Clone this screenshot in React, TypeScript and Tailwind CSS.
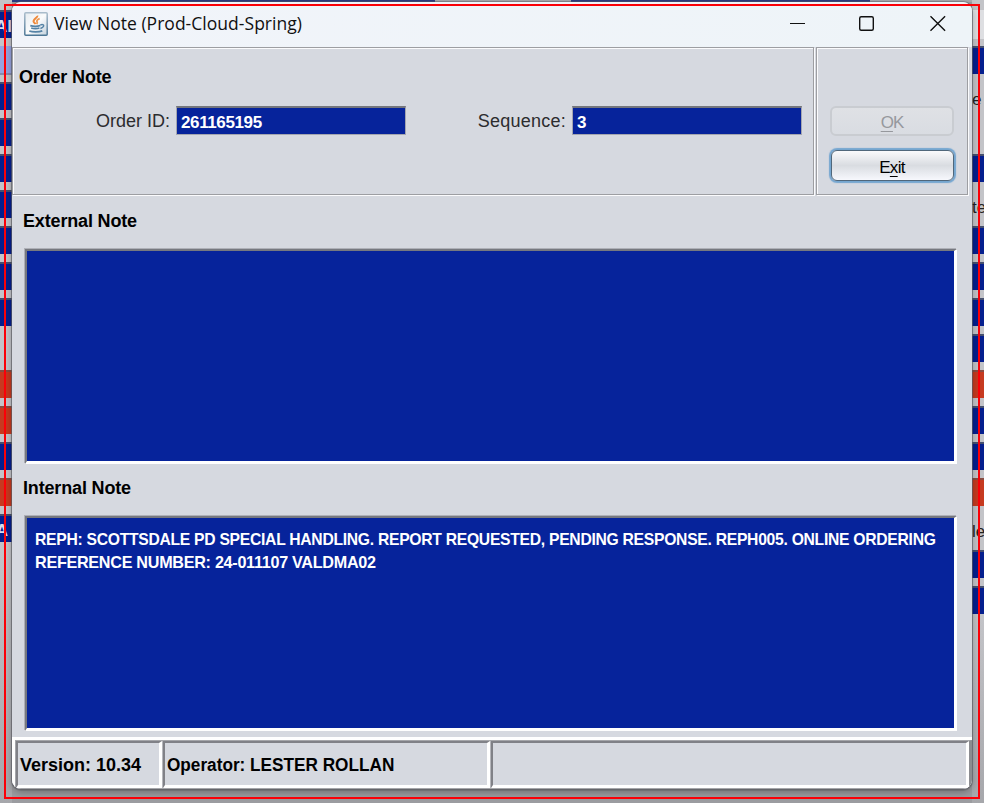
import React from "react";

type Band = { h: number; c: string; t?: string };

const bandStyles: Record<string, string> = {
  gray: "bg-[#c3c4c8]",
  blue: "bg-[#051f8e] border-t-2 border-[#46506f]",
  red: "bg-[#c63a20] border-t-2 border-[#8a4d42]",
  lav: "bg-[#98a5e0] border-b-2 border-[#858cae]",
  white: "bg-[#dedfe2]",
  fill: "bg-linear-to-b from-[#c3c4c8] to-[#a6a7ab]",
};

const b = (c: string): Band[] => [{ h: 28, c }, { h: 8, c: "gray" }];

const leftBands: Band[] = [
  { h: 10, c: "gray" },
  { h: 28, c: "blue", t: "Al" },
  { h: 8, c: "gray" },
  { h: 29, c: "lav" },
  { h: 7, c: "gray" },
  ...b("blue"), ...b("blue"), ...b("blue"), ...b("blue"), ...b("blue"), ...b("blue"),
  { h: 28, c: "blue" },
  { h: 44, c: "gray" },
  ...b("red"), ...b("red"), ...b("blue"), ...b("red"),
  { h: 28, c: "blue", t: "A" },
  { h: 261, c: "fill" },
];

const rightBands: Band[] = [
  { h: 10, c: "gray" },
  { h: 29, c: "white" },
  { h: 7, c: "gray" },
  { h: 28, c: "blue" },
  { h: 50, c: "gray", t: "e" },
  { h: 30, c: "gray" },
  { h: 28, c: "blue" },
  { h: 6, c: "gray" },
  { h: 38, c: "gray", t: "te" },
  ...b("blue"), ...b("blue"), ...b("blue"), ...b("blue"),
  ...b("red"), ...b("blue"), ...b("blue"),
  { h: 28, c: "red" },
  { h: 6, c: "gray" },
  { h: 38, c: "gray", t: "le" },
  ...b("blue"),
  { h: 28, c: "blue" },
  { h: 189, c: "fill" },
];

function Strip({ bands, side }: { bands: Band[]; side: "left" | "right" }) {
  return (
    <div className="flex w-3 shrink-0 flex-col overflow-hidden">
      {bands.map((x, i) => (
        <div
          key={i}
          style={{ height: x.h }}
          className={`flex w-full shrink-0 items-center overflow-hidden whitespace-nowrap text-[17px] leading-none ${bandStyles[x.c]} ${
            side === "left" ? "justify-end pt-0.5 font-bold text-[#d8dcec]" : "text-[#222]"
          } ${x.t === "A" ? "pr-1" : ""}`}
        >
          {x.t}
        </div>
      ))}
    </div>
  );
}

function JavaIcon() {
  return (
    <svg width="24" height="24" viewBox="0 0 24 24" fill="none">
      <defs>
        <linearGradient id="jbg" x1="0" y1="0" x2="1" y2="1">
          <stop offset="0" stopColor="#e6ecf0" />
          <stop offset=".5" stopColor="#fafbfc" />
          <stop offset="1" stopColor="#c3d2dd" />
        </linearGradient>
        <linearGradient id="jbd" x1="0" y1="0" x2="0" y2="1">
          <stop offset="0" stopColor="#a9bccb" />
          <stop offset="1" stopColor="#4d7796" />
        </linearGradient>
      </defs>
      <rect x=".8" y=".8" width="22.4" height="22.4" rx="1" fill="url(#jbg)" stroke="url(#jbd)" strokeWidth="1.5" />
      <path d="M13.4 3.6c.6 2-4.6 3.6-3.8 6.1.3 1 1.6 1.4 2 2.4" stroke="#ee8a3c" strokeWidth="2" />
      <path d="M15.7 6.7c-2.1.8-3.4 1.8-2.7 3 .5.9.8 1.3-.4 2.4" stroke="#ee9a55" strokeWidth="1.8" />
      <path d="M6.3 13.6c3 .9 7.5.8 10-.1M7.2 16c2.6.8 6 .7 8.2 0M5.3 19c3.4 1.2 9.7 1.1 13-.2" stroke="#5683a6" strokeWidth="1.8" />
      <path d="M16.3 13c2.5-1.2 4.2.2 3 1.7-.6.8-1.7 1.4-2.9 1.8" stroke="#5683a6" strokeWidth="1.4" />
    </svg>
  );
}

function Field({ value }: { value: string }) {
  return (
    <div className="flex h-[29px] w-[230px] items-center border border-t-2 border-[#a4a6b0] border-t-[#74767d] bg-[#06239b] pt-[3px] pl-1 text-[17px] font-bold tracking-[-0.38px] text-white">
      {value}
    </div>
  );
}

const etched =
  "border border-[#9d9ea2] shadow-[inset_1px_1px_0_#fbfbfd,1px_1px_0_#fbfbfd]";

const heading = "ml-[11px] text-[18px] leading-[22px] font-bold tracking-[-0.16px] text-black";

function Note({ children }: { children?: React.ReactNode }) {
  return (
    <div className="ml-[13px] h-[215px] w-[932px] border-2 border-r-[3px] border-b-[3px] border-t-[#76787f] border-r-white border-b-white border-l-[#76787f] bg-[#06239b] pt-[10px] pl-2 text-[17px] leading-[23px] font-bold whitespace-nowrap text-white shadow-[-1px_-1px_0_#aeb0b7]">
      {children}
    </div>
  );
}

const cell =
  "flex items-center border-2 border-r-[3px] border-b-[3px] border-t-[#808187] border-l-[#808187] border-r-white border-b-white pt-0.5 pl-0.5 text-[18px] font-bold whitespace-nowrap text-black";

export default function App() {
  return (
    <div className="relative flex h-[803px] w-[984px] overflow-hidden bg-[#c3c4c8] font-['Liberation_Sans',Arial,sans-serif] text-[#101010]">
      <Strip bands={leftBands} side="left" />
      <div className="flex h-full w-[960px] shrink-0 flex-col bg-[#9b9ca0]">
        <div className="flex h-0.5 shrink-0 bg-[#a9aaae]">
          <div className="w-[423px] bg-[#2b3b82]" />
          <div className="w-[136px]" />
          <div className="w-[299px] bg-[#2b3b82]" />
        </div>
        <div className="z-10 flex h-[787px] w-full shrink-0 flex-col overflow-hidden rounded-[9px] bg-[#d6d9e0] shadow-[0_0_0_1px_rgba(90,92,98,0.45),0_1px_0_1px_rgba(90,92,98,0.4),0_3px_8px_rgba(0,0,0,0.3)]">
          <header className="flex h-[45px] shrink-0 items-center bg-linear-to-r from-[#f1f4fa] to-[#eef4f8] pl-3">
            <div className="-mt-0.5">
              <JavaIcon />
            </div>
            <h1 className="-mt-0.5 ml-1.5 flex-1 font-['Open_Sans','Noto_Sans',sans-serif] text-[17.5px] tracking-[0.03px] whitespace-nowrap">
              View Note (Prod-Cloud-Spring)
            </h1>
            <svg className="-mt-1 mr-[26px]" width="156" height="18" viewBox="0 0 156 18" fill="none" stroke="#111" strokeWidth="1.4">
              <path d="M0 9.5h15" strokeWidth="1" />
              <rect x="69.7" y="2.7" width="13.6" height="13.6" rx="1.5" />
              <path d="M140.5 2.2l14.6 14.6M155.1 2.2l-14.6 14.6" />
            </svg>
          </header>
          <div className="flex h-[148px] shrink-0 gap-0.5">
            <section className={`w-[802px] ${etched}`}>
              <h2 className="mt-[18px] ml-1.5 text-[18px] leading-[22px] font-bold tracking-[-0.16px] text-black">Order Note</h2>
              <div className="mt-[18px] flex items-center text-[18px] text-[#2c2c2e]">
                <label className="w-[163px] pt-0.5 pr-1.5 text-right whitespace-nowrap">Order ID:</label>
                <Field value="261165195" />
                <label className="w-[166px] pt-0.5 pr-1.5 text-right tracking-[0.25px] whitespace-nowrap">Sequence:</label>
                <Field value="3" />
              </div>
            </section>
            <section className={`flex w-[152px] flex-col items-center pt-[58px] ${etched}`}>
              <button className="flex h-[30px] w-[124px] items-center justify-center rounded-[6px] border-2 border-[#c9ccd1] bg-linear-to-b from-[#dfe1e5] to-[#d9dce2] pt-[3px] text-[17px] tracking-[-1px] text-[#96989d]">
                <span className="underline underline-offset-[3px]">O</span>K
              </button>
              <button className="mt-[14px] flex h-[31px] w-[123px] items-center justify-center rounded-[6px] border border-[#50677b] bg-linear-to-b from-[#fafafc] via-[#d9dce1] to-[#f7f8fd] pt-1 text-[17px] tracking-[-0.7px] text-black shadow-[0_0_1px_2px_#75a6d0]">
                E<span className="underline underline-offset-[3px]">x</span>it
              </button>
            </section>
          </div>
          <h2 className={`mt-[15px] ${heading}`}>External Note</h2>
          <div className="mt-[17px]">
            <Note />
          </div>
          <h2 className={`mt-[13px] ${heading}`}>Internal Note</h2>
          <div className="mt-[17px]">
            <Note>
              <p className="w-fit origin-left scale-x-[0.9225] tracking-[-0.3px]">REPH: SCOTTSDALE PD SPECIAL HANDLING. REPORT REQUESTED, PENDING RESPONSE. REPH005. ONLINE ORDERING</p>
              <p className="w-fit origin-left scale-x-[0.951] tracking-[-0.3px]">REFERENCE NUMBER: 24-011107 VALDMA02</p>
            </Note>
          </div>
          <footer className="mt-1.5 flex h-[52px] shrink-0 border-t-[3px] border-l-[3px] border-white bg-[#d6d9e0]">
            <div className="flex h-[49px] w-full border border-r-[3px] border-[#a5a6aa] border-r-[#8b8c90]">
              <div className={`${cell} w-[146px]`}>Version: 10.34</div>
              <div className={`${cell} ml-px w-[327px] shadow-[-1px_0_0_#b5b6bb]`}>
                <span className="origin-left scale-x-[0.955]">Operator: LESTER ROLLAN</span>
              </div>
              <div className={`${cell} ml-px flex-1 shadow-[-1px_0_0_#b5b6bb]`} />
            </div>
          </footer>
        </div>
      </div>
      <Strip bands={rightBands} side="right" />
      <div className="pointer-events-none absolute top-1 left-1 z-20 h-[795px] w-[976px] border-2 border-[#fb0007]" />
    </div>
  );
}
